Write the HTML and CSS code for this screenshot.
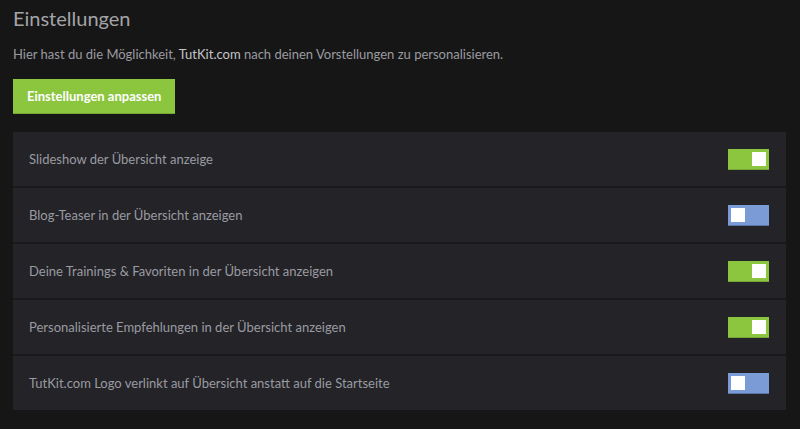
FILE: index.html
```html
<!DOCTYPE html>
<html lang="de">
<head>
    <meta charset="UTF-8">
    <title>Einstellungen</title>
    <link rel="stylesheet" href="styles.css">
</head>
<body>
    <main class="settings">
        <h1>Einstellungen</h1>
        <p class="intro">Hier hast du die Möglichkeit, <strong>TutKit.com</strong> nach deinen Vorstellungen zu personalisieren.</p>
        <button class="btn-save">Einstellungen anpassen</button>

        <ul class="option-list">
            <li class="option">
                <span class="option-label">Slideshow der Übersicht anzeige</span>
                <span class="toggle on"><span class="knob"></span></span>
            </li>
            <li class="option">
                <span class="option-label">Blog-Teaser in der Übersicht anzeigen</span>
                <span class="toggle off"><span class="knob"></span></span>
            </li>
            <li class="option">
                <span class="option-label">Deine Trainings &amp; Favoriten in der Übersicht anzeigen</span>
                <span class="toggle on"><span class="knob"></span></span>
            </li>
            <li class="option">
                <span class="option-label">Personalisierte Empfehlungen in der Übersicht anzeigen</span>
                <span class="toggle on"><span class="knob"></span></span>
            </li>
            <li class="option">
                <span class="option-label">TutKit.com Logo verlinkt auf Übersicht anstatt auf die Startseite</span>
                <span class="toggle off"><span class="knob"></span></span>
            </li>
        </ul>
    </main>
</body>
</html>
```

FILE: styles.css
```css
body {
    margin: 0;
    background-color: #161616;
    font-family: "Lato", "Liberation Sans", sans-serif;
    color: #9a9ba0;
}
.settings {
    padding: 5px 14px 0 13px;
}
h1 {
    margin: 0;
    font-size: 20px;
    font-weight: normal;
    line-height: 26px;
    color: #a3a4a8;
}
.intro {
    margin: 14px 0 0;
    font-size: 13px;
    line-height: 18px;
}
.intro strong {
    font-weight: normal;
    color: #c4c5c9;
}
.btn-save {
    display: block;
    margin-top: 16px;
    height: 35px;
    padding: 0 14px;
    border: none;
    border-bottom: 1px solid #76a934;
    background-color: #8cc63f;
    color: #fff;
    font-family: inherit;
    font-size: 13px;
    font-weight: bold;
    cursor: pointer;
}
.option-list {
    list-style: none;
    margin: 18px 0 0;
    padding: 0;
    background-color: #232328;
}
.option {
    display: flex;
    align-items: center;
    justify-content: space-between;
    height: 54px;
    padding: 0 17px 0 16px;
    border-bottom: 2px solid #19191c;
    font-size: 13px;
}
.option:last-child {
    border-bottom: none;
}
.toggle {
    display: flex;
    align-items: center;
    width: 41px;
    height: 21px;
    padding: 0 3px;
    box-sizing: border-box;
}
.toggle .knob {
    width: 14px;
    height: 14px;
    background-color: #fff;
}
.toggle.on {
    justify-content: flex-end;
    background-color: #8cc63f;
    border-bottom: 1px solid #75a838;
}
.toggle.off {
    justify-content: flex-start;
    background-color: #7b9bd6;
    border-bottom: 1px solid #5a76a8;
}
```
